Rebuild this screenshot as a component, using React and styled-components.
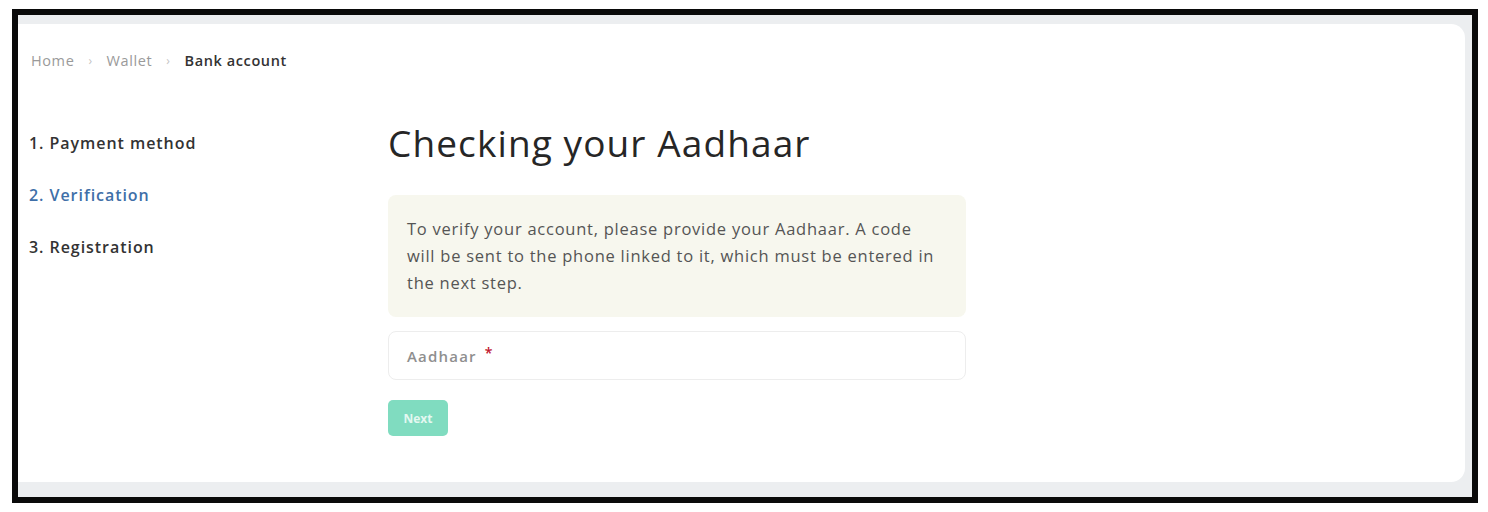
import React from 'react'
import styled, { createGlobalStyle } from 'styled-components'

const GlobalStyle = createGlobalStyle`
  body {
    margin: 0;
    background: #ffffff;
    font-family: 'Open Sans', 'Liberation Sans', sans-serif;
  }
`

const Page = styled.div`
  padding: 9px 10px 9px 12px;
  height: 512px;
  box-sizing: border-box;
`

const Frame = styled.div`
  width: 1466px;
  height: 494px;
  box-sizing: border-box;
  border: 6px solid #0a0a0a;
  background: #eceef0;
  padding: 9px 7px 15px 0;
  display: flex;
`

const Card = styled.div`
  flex: 1;
  background: #ffffff;
  border-radius: 0 14px 14px 0;
  padding: 26px 0 0 13px;
  box-sizing: border-box;
`

const Breadcrumb = styled.nav`
  display: flex;
  align-items: center;
  gap: 14px;
  font-size: 14.5px;
  letter-spacing: 0.6px;
  color: #9a9a9a;
  height: 20px;
`

const Crumb = styled.span`
  color: ${(p) => (p.$current ? '#333333' : '#9a9a9a')};
  font-weight: ${(p) => (p.$current ? 600 : 400)};
`

const Sep = styled.span`
  color: #c4c4c4;
  font-size: 12px;
`

const Body = styled.div`
  display: grid;
  grid-template-columns: 357px 578px;
  margin-top: 49px;
`

const Steps = styled.ol`
  list-style: none;
  margin: 13px 0 0 -2px;
  padding: 0;
  display: flex;
  flex-direction: column;
  gap: 30px;
`

const Step = styled.li`
  font-size: 16px;
  font-weight: 600;
  letter-spacing: 0.95px;
  line-height: 22px;
  color: ${(p) => (p.$active ? '#3f6fa8' : '#333333')};
`

const Main = styled.div`
  display: flex;
  flex-direction: column;
`

const Title = styled.h1`
  margin: 0;
  font-size: 37px;
  font-weight: 400;
  letter-spacing: 1.1px;
  color: #262626;
  line-height: 48px;
`

const InfoBox = styled.div`
  margin-top: 28px;
  background: #f7f7ee;
  border-radius: 8px;
  padding: 20px 4px 21px 19px;
  font-size: 16.5px;
  line-height: 27px;
  color: #555555;
  letter-spacing: 0.75px;
  white-space: nowrap;
`

const Field = styled.div`
  margin-top: 14px;
  height: 49px;
  box-sizing: border-box;
  border: 1px solid #ededed;
  border-radius: 8px;
  padding: 0 18px;
  display: flex;
  align-items: center;
  font-size: 15px;
  font-weight: 600;
  letter-spacing: 1.2px;
  color: #8f8f8f;
`

const Required = styled.span`
  color: #c0142d;
  margin-left: 8px;
  font-size: 14px;
  position: relative;
  top: -3px;
`

const NextButton = styled.button`
  margin-top: 20px;
  width: 60px;
  height: 36px;
  border: none;
  border-radius: 5px;
  background: #80dcc0;
  color: #e4f8f1;
  font-family: inherit;
  font-size: 12px;
  font-weight: 700;
  cursor: default;
`

export default function App() {
  return (
    <Page>
      <GlobalStyle />
      <Frame>
        <Card>
          <Breadcrumb>
            <Crumb>Home</Crumb>
            <Sep>›</Sep>
            <Crumb>Wallet</Crumb>
            <Sep>›</Sep>
            <Crumb $current>Bank account</Crumb>
          </Breadcrumb>
          <Body>
            <Steps>
              <Step>1. Payment method</Step>
              <Step $active>2. Verification</Step>
              <Step>3. Registration</Step>
            </Steps>
            <Main>
              <Title>Checking your Aadhaar</Title>
              <InfoBox>
                To verify your account, please provide your Aadhaar. A code
                <br />
                will be sent to the phone linked to it, which must be entered in
                <br />
                the next step.
              </InfoBox>
              <Field>
                Aadhaar<Required>*</Required>
              </Field>
              <div>
                <NextButton>Next</NextButton>
              </div>
            </Main>
          </Body>
        </Card>
      </Frame>
    </Page>
  )
}
